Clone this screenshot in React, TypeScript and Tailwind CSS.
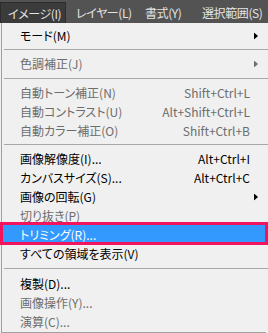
import React from "react";

type Item =
  | { type: "sep"; h: string }
  | {
      type: "item";
      label: string;
      shortcut?: string;
      disabled?: boolean;
      arrow?: boolean;
      active?: boolean;
    };

const items: Item[] = [
  { type: "item", label: "モード(M)", arrow: true },
  { type: "sep", h: "h-[9px]" },
  { type: "item", label: "色調補正(J)", arrow: true, disabled: true },
  { type: "sep", h: "h-[10px]" },
  { type: "item", label: "自動トーン補正(N)", shortcut: "Shift+Ctrl+L", disabled: true },
  { type: "item", label: "自動コントラスト(U)", shortcut: "Alt+Shift+Ctrl+L", disabled: true },
  { type: "item", label: "自動カラー補正(O)", shortcut: "Shift+Ctrl+B", disabled: true },
  { type: "sep", h: "h-[9px]" },
  { type: "item", label: "画像解像度(I)...", shortcut: "Alt+Ctrl+I" },
  { type: "item", label: "カンバスサイズ(S)...", shortcut: "Alt+Ctrl+C" },
  { type: "item", label: "画像の回転(G)", arrow: true },
  { type: "item", label: "切り抜き(P)", disabled: true },
  { type: "item", label: "トリミング(R)...", active: true },
  { type: "item", label: "すべての領域を表示(V)" },
  { type: "sep", h: "h-[11px]" },
  { type: "item", label: "複製(D)..." },
  { type: "item", label: "画像操作(Y)...", disabled: true },
  { type: "item", label: "演算(C)...", disabled: true },
];

function Arrow({ color }: { color: string }) {
  return (
    <svg width="4" height="7" viewBox="0 0 4 7" className="absolute right-[10px] top-1/2 -translate-y-1/2">
      <path d="M0 0 L4 3.5 L0 7 Z" fill={color} />
    </svg>
  );
}

export default function App() {
  return (
    <div
      className="w-[268px] h-[333px] overflow-hidden bg-[#f0f0f0] text-[12px] leading-none [font-feature-settings:'palt']"
      style={{ fontFamily: '"Noto Sans CJK JP", "Noto Sans", sans-serif' }}
    >
      <div className="h-[23px] bg-[#535353] flex items-end text-[#e4e4e4] whitespace-nowrap tracking-[-0.4px]">
        <div className="h-[21px] w-[66px] shrink-0 bg-[#3b3b3b] border border-[#2c2c2c] border-b-0 flex items-center pl-[7px] pt-[1px]">
          イメージ(I)
        </div>
        <div className="h-[21px] w-[79px] shrink-0 flex items-center pl-[10px] pt-[1px]">レイヤー(L)</div>
        <div className="h-[21px] w-[57px] shrink-0 flex items-center pt-[1px]">書式(Y)</div>
        <div className="h-[21px] shrink-0 flex items-center pt-[1px]">選択範囲(S)</div>
      </div>
      <div className="ml-px border-l border-[#a0a0a0] pt-[3px]">
        {items.map((it, i) =>
          it.type === "sep" ? (
            <div key={i} className={`${it.h} flex items-center pl-[2px]`}>
              <div className="h-px w-full bg-[#a8a8a8]" />
            </div>
          ) : (
            <div
              key={i}
              className={`relative h-[19px] flex items-center pl-[18px] pr-[18px] whitespace-nowrap ${
                it.active ? "bg-[#3399ff] text-white" : it.disabled ? "text-[#6d6d6d]" : "text-black"
              }`}
            >
              <span>{it.label}</span>
              {it.shortcut && <span className="ml-auto">{it.shortcut}</span>}
              {it.arrow && <Arrow color={it.disabled ? "#6d6d6d" : "#000000"} />}
              {it.active && (
                <div className="absolute -top-[3px] -bottom-[1px] -left-[2px] right-0 border-[3px] border-[#f2145c]" />
              )}
            </div>
          )
        )}
        <div className="h-px w-[264px] bg-[#a0a0a0] mt-[1px]" />
      </div>
    </div>
  );
}
